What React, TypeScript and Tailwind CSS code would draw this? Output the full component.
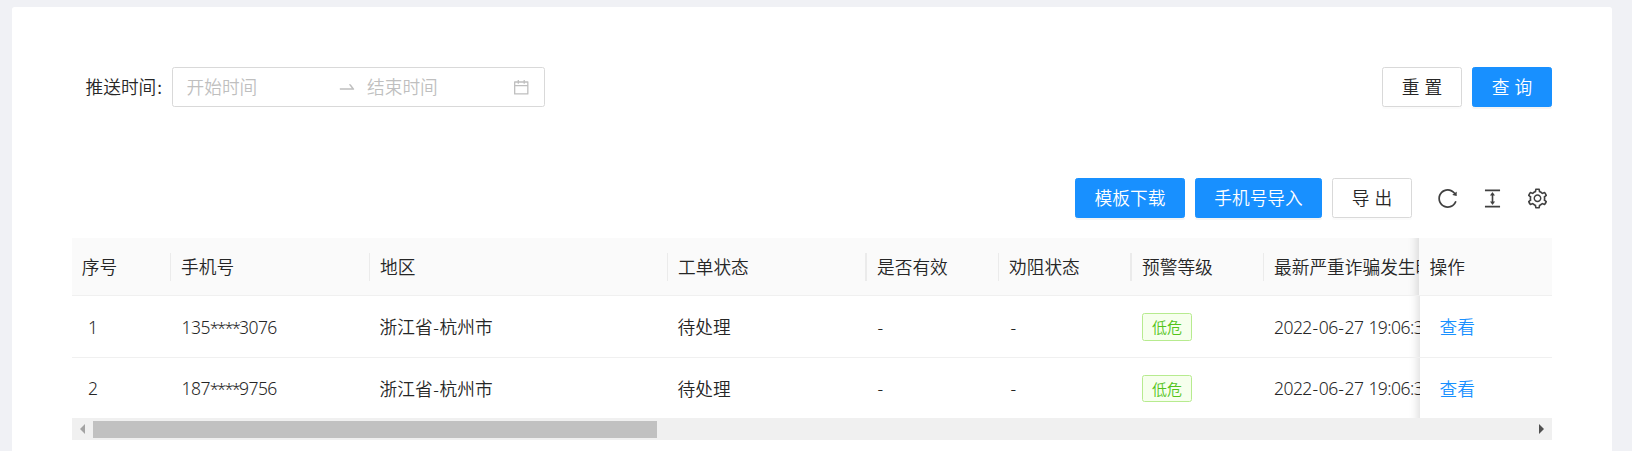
import type { ReactNode } from 'react';
import {
  AiOutlineCalendar,
  AiOutlineColumnHeight,
  AiOutlineReload,
  AiOutlineSetting,
  AiOutlineSwapRight,
} from 'react-icons/ai';

const GRID = 'grid grid-cols-[99px_199px_298px_199px_132px_133px_132px_288px]';

const HEADERS = [
  { title: '手机号' },
  { title: '地区' },
  { title: '工单状态', wide: true },
  { title: '是否有效' },
  { title: '劝阻状态', wide: true },
  { title: '预警等级' },
  { title: '最新严重诈骗发生时间' },
];

const ROWS = [
  { id: '1', phone: '135****3076', area: ['浙江省', '杭州市'], status: '待处理', level: '低危', time: '2022-06-27 19:06:35' },
  { id: '2', phone: '187****9756', area: ['浙江省', '杭州市'], status: '待处理', level: '低危', time: '2022-06-27 19:06:35' },
];

/** Latin digits and punctuation set with compact spacing. */
function Num({ children }: { children: string }) {
  return (
    <span className="font-['Noto_Sans',sans-serif] text-[17.5px] font-[350] tracking-[-0.55px] [word-spacing:1px]">
      {children.split(/(\*+|-)/).map((part, i) => {
        if (part.startsWith('*')) return <span key={i} className="text-[16.5px] tracking-[-1.8px]">{part}</span>;
        if (part === '-') return <span key={i} className="ml-[0.6px] tracking-[0.7px]">{part}</span>;
        return part;
      })}
    </span>
  );
}

function Button({ primary, spaced, className, children }: { primary?: boolean; spaced?: boolean; className: string; children: ReactNode }) {
  return (
    <button
      className={`${className} flex h-10 items-center justify-center rounded-[2.5px] border whitespace-nowrap ${
        primary
          ? 'border-[#1890ff] bg-[#1890ff] text-white shadow-[0_2px_0_rgba(0,0,0,0.045)]'
          : 'border-[#d9d9d9] bg-white text-[#262626] shadow-[0_2px_0_rgba(0,0,0,0.016)]'
      }`}
    >
      {spaced ? <span className="-mr-[5px] tracking-[5px]">{children}</span> : children}
    </button>
  );
}

function EdgeShadow() {
  return <div className="pointer-events-none absolute inset-y-0 right-full w-[37px] shadow-[inset_-12px_0_10px_-10px_rgba(0,0,0,0.15)]" />;
}

export default function App() {
  return (
    <div className="h-[451px] overflow-hidden bg-[#f0f1f5] pt-[7px] pl-3 font-['Noto_Sans_CJK_SC',sans-serif] text-[17.7px] leading-[27.5px] font-[350] text-[#262626]">
      <main className="h-[460px] w-[1600px] rounded-[2.5px] bg-white px-[60px] pt-[60px]">
        <div className="flex h-10 items-center">
          <span className="ml-[13.5px] w-[86.5px] whitespace-nowrap">
            推送时间<span className="ml-[1px]">:</span>
          </span>
          <div className="flex h-10 w-[373px] items-center rounded-[2.5px] border border-[#d9d9d9] text-[#bfbfbf]">
            <span className="ml-[13.5px] w-[150px]">开始时间</span>
            <AiOutlineSwapRight className="size-5" />
            <span className="ml-[10.5px] w-[145px]">结束时间</span>
            <AiOutlineCalendar className="size-[18.5px]" />
          </div>
          <div className="ml-auto flex gap-2.5">
            <Button spaced className="w-20">重置</Button>
            <Button primary spaced className="w-20">查询</Button>
          </div>
        </div>

        <div className="mt-[71px] flex h-10 items-center justify-end gap-2.5">
          <Button primary className="w-[110px]">模板下载</Button>
          <Button primary className="w-[127px]">手机号导入</Button>
          <Button spaced className="w-20">导出</Button>
          <div className="ml-[14px] flex gap-[21.75px] pr-[3.5px] text-[#404040]">
            <AiOutlineReload className="size-[23px]" />
            <AiOutlineColumnHeight className="size-[23px]" />
            <AiOutlineSetting className="size-[23px]" />
          </div>
        </div>

        <section className="mt-5">
          <div className="flex">
            <div className="w-[1348px] overflow-hidden">
              <div className={`${GRID} h-[58px] items-center border-b border-[#f0f0f0] bg-[#fafafa]`}>
                <div className="flex h-7 items-center border-r border-[#ebebeb] pl-[9.75px]">序号</div>
                {HEADERS.map(({ title, wide }) => (
                  <div
                    key={title}
                    className={`flex h-7 items-center border-[#ebebeb] pl-[10px] whitespace-nowrap ${wide ? 'border-r-2' : 'border-r'}`}
                  >
                    {title}
                  </div>
                ))}
              </div>
              {ROWS.map((row, i) => (
                <div
                  key={row.id}
                  className={`${GRID} items-center whitespace-nowrap ${i === 0 ? 'h-[62px] border-b border-[#f0f0f0]' : 'h-[60px]'}`}
                >
                  <div className="pt-px pl-4"><Num>{row.id}</Num></div>
                  <div className="pt-px pl-[10.5px]"><Num>{row.phone}</Num></div>
                  <div className="pt-[2px] pl-[9.5px]">{row.area[0]}<Num>-</Num>{row.area[1]}</div>
                  <div className="pt-px pl-[9.5px]">{row.status}</div>
                  <div className="pt-px pl-[10px]"><Num>-</Num></div>
                  <div className="pt-px pl-[11px]"><Num>-</Num></div>
                  <div className="pl-[10px]">
                    <div
                      className={`flex w-[50px] items-center justify-center rounded-[2.5px] border border-[#b7eb8f] bg-[#f6ffed] text-[15px] leading-[25px] text-[#52c41a] ${
                        i === 0 ? 'h-7' : 'mt-px h-[27px]'
                      }`}
                    >
                      {row.level}
                    </div>
                  </div>
                  <div className="pt-px pl-[10px]"><Num>{row.time}</Num></div>
                </div>
              ))}
            </div>
            <div className="w-[132px]">
              <div className="relative -ml-px flex h-[58px] items-center border-b border-[#f0f0f0] bg-[#fafafa] pl-[10.5px]">
                <EdgeShadow />
                操作
              </div>
              {ROWS.map((row, i) => (
                <div
                  key={row.id}
                  className={`relative flex items-center bg-white pt-px pl-[19.5px] text-[#1890ff] ${i === 0 ? 'h-[62px] border-b border-[#f0f0f0]' : 'h-[60px]'}`}
                >
                  <EdgeShadow />
                  查看
                </div>
              ))}
            </div>
          </div>

          <div className="flex h-[22px] items-center bg-[#f0f0f0]">
            <div className="flex w-[21px] justify-center">
              <svg className="-ml-[1px] h-[10px] w-[5px] fill-[#a3a3a3]" viewBox="0 0 5 10"><path d="M5 0v10L0 5z" /></svg>
            </div>
            <div className="h-[17px] w-[564px] bg-[#c1c1c1]" />
            <svg className="mr-2 ml-auto h-[10px] w-[5px] fill-[#505050]" viewBox="0 0 5 10"><path d="M0 0v10l5-5z" /></svg>
          </div>
        </section>
      </main>
    </div>
  );
}
